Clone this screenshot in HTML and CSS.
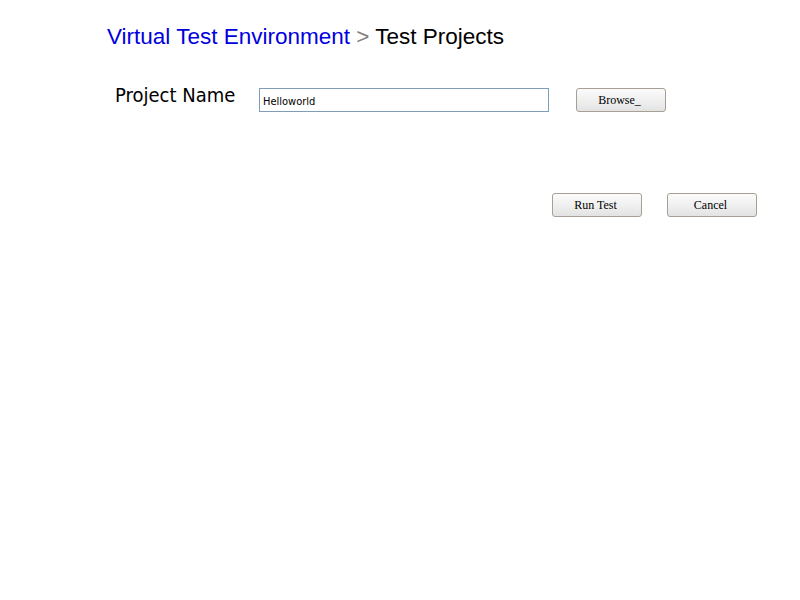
FILE: index.html
```html
<!DOCTYPE html>
<html>
<head>
<meta charset="utf-8">
<link rel="stylesheet" href="styles.css">
</head>
<body>
<div class="page">
  <h1 class="crumbs"><span class="crumb-link">Virtual Test Environment</span> <span class="sep">&gt;</span> <span class="crumb-current">Test Projects</span></h1>
  <div class="form-row">
    <label class="label" for="pn">Project Name</label>
    <input id="pn" class="text-input" type="text" value="Helloworld">
    <button class="btn browse">Browse_</button>
  </div>
  <div class="actions">
    <button class="btn">Run Test</button>
    <button class="btn">Cancel</button>
  </div>
</div>
</body>
</html>
```
FILE: styles.css
```css
html, body {
  margin: 0;
  padding: 0;
  background: #ffffff;
}
.page {
  width: 800px;
  height: 600px;
  box-sizing: border-box;
  padding-top: 23px;
}
.crumbs {
  margin: 0 0 0 107px;
  font-family: "Liberation Sans", Arial, sans-serif;
  font-weight: normal;
  font-size: 22.5px;
  line-height: 28px;
  white-space: nowrap;
}
.crumb-link { color: #0000dd; }
.sep { color: #808080; }
.crumb-current { color: #000000; }
.form-row {
  display: flex;
  align-items: flex-start;
  margin-top: 37px;
  margin-left: 115px;
}
.label {
  font-family: "DejaVu Sans Condensed", Tahoma, sans-serif;
  font-size: 20px;
  line-height: 24px;
  color: #000;
  width: 144px;
  margin-top: -5px;
}
.text-input {
  box-sizing: border-box;
  width: 290px;
  height: 24px;
  margin: 0;
  border: 1px solid #7f9db9;
  padding: 2px 3px 0;
  font-family: "DejaVu Sans Condensed", Tahoma, sans-serif;
  font-size: 11px;
  color: #000;
  outline: none;
}
.btn {
  box-sizing: border-box;
  width: 90px;
  height: 24px;
  margin: 0;
  padding: 1px 3px 0 0;
  border: 1px solid #a89f94;
  border-radius: 3px;
  background: linear-gradient(#fbfbfb, #f0f0f0 50%, #e3e3e3);
  font-family: "Liberation Serif", "Times New Roman", serif;
  font-size: 12px;
  color: #000;
}
.browse { margin-left: 27px; }
.actions {
  display: flex;
  justify-content: flex-end;
  gap: 25px;
  margin-top: 81px;
  padding-right: 43px;
}
```
